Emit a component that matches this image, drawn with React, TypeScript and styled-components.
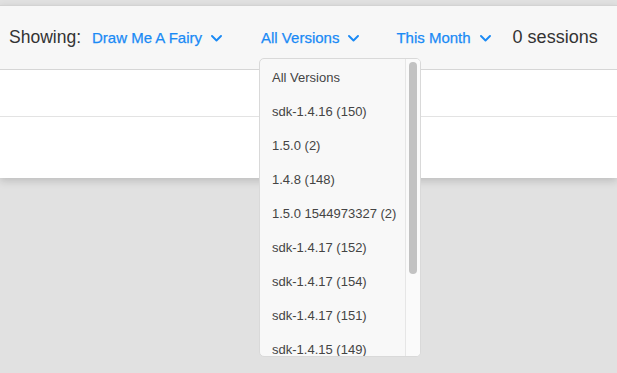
import React from "react";
import styled, { createGlobalStyle } from "styled-components";

const Global = createGlobalStyle`
  html, body { margin: 0; padding: 0; }
  body {
    background: #e1e1e1;
    font-family: "Liberation Sans", Arial, sans-serif;
    width: 617px;
    height: 373px;
    overflow: hidden;
  }
`;

const Page = styled.div`
  padding-top: 5px;
`;

const Card = styled.div`
  background: #ffffff;
  border-top: 1px solid #d3d3d3;
  box-shadow: 0 3px 8px rgba(0, 0, 0, 0.16);
`;

const Toolbar = styled.div`
  height: 64px;
  background: #f7f7f7;
  border-bottom: 1px solid #d6d6d6;
  display: flex;
  align-items: center;
  padding-left: 9px;
  box-sizing: border-box;
`;

const Label = styled.span<{ $gap?: number; $size?: number }>`
  font-size: ${(p) => p.$size ?? 17.5}px;
  color: #333333;
  margin-right: ${(p) => p.$gap ?? 0}px;
`;

const Filter = styled.div<{ $gap: number }>`
  position: relative;
  display: flex;
  align-items: center;
  margin-right: ${(p) => p.$gap}px;
`;

const FilterText = styled.span`
  font-size: 15px;
  color: #1a8af5;
  -webkit-text-stroke: 0.25px #1a8af5;
`;

const Chevron = styled.svg`
  margin-left: 9px;
  width: 11px;
  height: 7px;
  margin-top: 1px;
`;

const Row = styled.div<{ $h: number; $last?: boolean }>`
  height: ${(p) => p.$h}px;
  border-bottom: ${(p) => (p.$last ? "none" : "1px solid #e3e3e3")};
`;

const Menu = styled.div`
  position: absolute;
  left: -2px;
  top: 29px;
  width: 162px;
  height: 299px;
  box-sizing: border-box;
  background: #f8f8f8;
  border: 1px solid #d9d9d9;
  border-radius: 5px;
  display: flex;
  overflow: hidden;
  z-index: 5;
`;

const MenuList = styled.div`
  flex: 1;
  display: flex;
  flex-direction: column;
  padding-top: 1px;
`;

const MenuItem = styled.div`
  height: 34px;
  flex: none;
  display: flex;
  align-items: center;
  padding-left: 12px;
  font-size: 13px;
  color: #444444;
  white-space: nowrap;
`;

const Track = styled.div`
  width: 15px;
  flex: none;
  border-left: 1px solid #e6e6e6;
  background: #fafafa;
  box-sizing: border-box;
  padding: 3px 0 0 3px;
`;

const Thumb = styled.div`
  width: 8px;
  height: 212px;
  border-radius: 4px;
  background: #c2c2c2;
`;

const ChevronIcon = () => (
  <Chevron viewBox="0 0 11 7">
    <path d="M1 1 L5.5 5.5 L10 1" fill="none" stroke="#1a8af5" strokeWidth="1.9" strokeLinecap="round" strokeLinejoin="round" />
  </Chevron>
);

const versions = [
  "All Versions",
  "sdk-1.4.16 (150)",
  "1.5.0 (2)",
  "1.4.8 (148)",
  "1.5.0 1544973327 (2)",
  "sdk-1.4.17 (152)",
  "sdk-1.4.17 (154)",
  "sdk-1.4.17 (151)",
  "sdk-1.4.15 (149)",
];

export default function App() {
  return (
    <>
      <Global />
      <Page>
        <Card>
          <Toolbar>
            <Label $gap={11}>Showing:</Label>
            <Filter $gap={39}>
              <FilterText>Draw Me A Fairy</FilterText>
              <ChevronIcon />
            </Filter>
            <Filter $gap={37}>
              <FilterText>All Versions</FilterText>
              <ChevronIcon />
              <Menu>
                <MenuList>
                  {versions.map((v, i) => (
                    <MenuItem key={i}>{v}</MenuItem>
                  ))}
                </MenuList>
                <Track>
                  <Thumb />
                </Track>
              </Menu>
            </Filter>
            <Filter $gap={22}>
              <FilterText>This Month</FilterText>
              <ChevronIcon />
            </Filter>
            <Label $size={18}>0 sessions</Label>
          </Toolbar>
          <Row $h={46} />
          <Row $h={61} $last />
        </Card>
      </Page>
    </>
  );
}
